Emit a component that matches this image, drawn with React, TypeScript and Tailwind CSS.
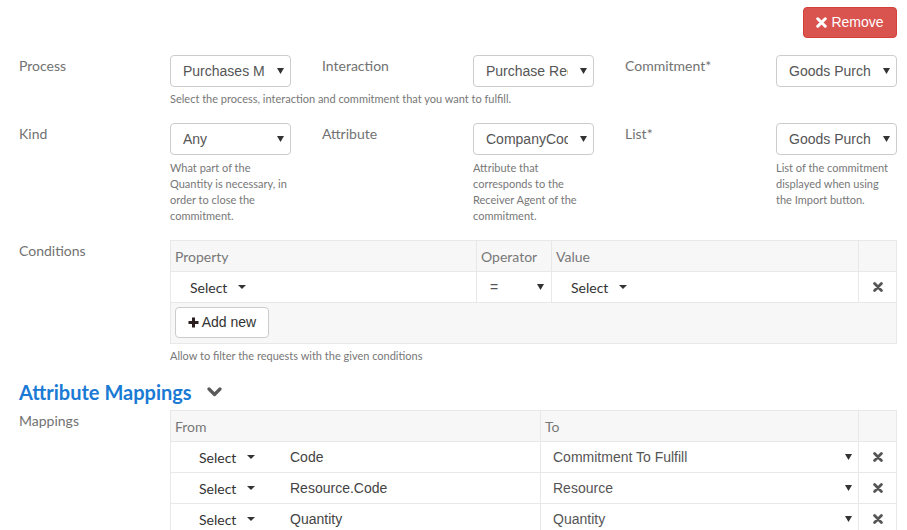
import type { ReactNode } from "react";

const SANS = "font-['Lato',Arial,sans-serif]";
const ARIAL = "font-['Liberation_Sans',Arial,sans-serif]";

function TimesIcon({ size = 10, color = "#555" }: { size?: number; color?: string }) {
  return (
    <svg width={size} height={size} viewBox="0 0 10 10">
      <path d="M1.6 1.6 L8.4 8.4 M8.4 1.6 L1.6 8.4" stroke={color} strokeWidth="2.8" strokeLinecap="round" />
    </svg>
  );
}

function PlusIcon() {
  return (
    <svg width="11" height="11" viewBox="0 0 11 11">
      <path d="M5.5 0.5 V10.5 M0.5 5.5 H10.5" stroke="#2b1f1f" strokeWidth="3" />
    </svg>
  );
}

function ChevronDown() {
  return (
    <svg width="15" height="10" viewBox="0 0 15 10">
      <path d="M2 2 L7.5 7.5 L13 2" fill="none" stroke="#5a5a5a" strokeWidth="3.2" strokeLinecap="round" strokeLinejoin="round" />
    </svg>
  );
}

function Arrow() {
  return (
    <svg width="7" height="6" viewBox="0 0 7 6" className="shrink-0">
      <polygon points="0,0 7,0 3.5,6" fill="#333" />
    </svg>
  );
}

function Caret() {
  return (
    <svg width="8" height="4" viewBox="0 0 8 4" className="shrink-0">
      <polygon points="0,0 8,0 4,4" fill="#333" />
    </svg>
  );
}

function Label({ children, className = "" }: { children: ReactNode; className?: string }) {
  return (
    <div className={`w-[151px] shrink-0 pt-[1px] leading-[20px] text-[14px] text-[#727272] ${SANS} ${className}`}>
      {children}
    </div>
  );
}

function Select({ value }: { value: string }) {
  return (
    <div className={`flex items-center w-[121px] h-[32px] border border-[#ccc] rounded-[4px] bg-white pl-[12px] pr-[6px] ${ARIAL} text-[14px] text-[#555]`}>
      <span className="w-[82px] overflow-hidden whitespace-nowrap">{value}</span>
      <span className="flex-1" />
      <Arrow />
    </div>
  );
}

function Help({ lines }: { lines: string[] }) {
  return (
    <div className={`text-[11px] leading-[16px] text-[#777] ${SANS}`}>
      {lines.map((l) => (
        <div key={l} className="whitespace-nowrap">
          {l}
        </div>
      ))}
    </div>
  );
}

function DropSelect() {
  return (
    <span className={`flex items-center gap-[11px] text-[14px] text-[#333] ${SANS}`}>
      Select
      <Caret />
    </span>
  );
}

const headCell = `bg-[#f7f7f7] h-[30px] flex items-center pl-[4px] text-[14px] text-[#777] ${SANS}`;
const bodyCell = "bg-white h-[30px] flex items-center";

const mappings = [
  { from: "Code", to: "Commitment To Fulfill" },
  { from: "Resource.Code", to: "Resource" },
  { from: "Quantity", to: "Quantity" },
];

export default function App() {
  return (
    <div className="w-[907px] h-[530px] overflow-hidden bg-white">
      <div className="flex justify-end pt-[7px] pr-[10px]">
        <button className={`flex items-center justify-center gap-[4px] w-[94px] h-[31px] rounded-[4px] bg-[#d9534f] border border-[#d43f3a] text-white text-[14px] ${ARIAL}`}>
          <TimesIcon size={11} color="#fff" />
          <span>Remove</span>
        </button>
      </div>

      {/* Process / Interaction / Commitment */}
      <div className="flex items-start pl-[19px] mt-[17px]">
        <Label>Process</Label>
        <Select value="Purchases Management" />
        <Label className="ml-[31px]">Interaction</Label>
        <Select value="Purchase Request" />
        <Label className="ml-[31px]">Commitment*</Label>
        <Select value="Goods Purchase" />
      </div>
      <div className="pl-[170px] mt-[4px]">
        <Help lines={["Select the process, interaction and commitment that you want to fulfill."]} />
      </div>

      {/* Kind / Attribute / List */}
      <div className="flex items-start pl-[19px] mt-[16px]">
        <Label>Kind</Label>
        <div className="w-[121px] shrink-0">
          <Select value="Any" />
          <div className="mt-[5px]">
            <Help lines={["What part of the", "Quantity is necessary, in", "order to close the", "commitment."]} />
          </div>
        </div>
        <Label className="ml-[31px]">Attribute</Label>
        <div className="w-[121px] shrink-0">
          <Select value="CompanyCode" />
          <div className="mt-[5px]">
            <Help lines={["Attribute that", "corresponds to the", "Receiver Agent of the", "commitment."]} />
          </div>
        </div>
        <Label className="ml-[31px]">List*</Label>
        <div className="w-[121px] shrink-0">
          <Select value="Goods Purchase" />
          <div className="mt-[5px]">
            <Help lines={["List of the commitment", "displayed when using", "the Import button."]} />
          </div>
        </div>
      </div>

      {/* Conditions */}
      <div className="flex items-start pl-[19px] mt-[16px]">
        <Label>Conditions</Label>
        <div className="w-[727px]">
          <div className="grid grid-cols-[305px_74px_306px_37px] gap-px p-px bg-[#e8e8e8]">
            <div className={headCell}>Property</div>
            <div className={headCell}>Operator</div>
            <div className={headCell}>Value</div>
            <div className={headCell} />
            <div className={`${bodyCell} pl-[19px]`}>
              <DropSelect />
            </div>
            <div className={`${bodyCell} pl-[13px] pr-[7px] text-[14px] text-[#555] ${ARIAL}`}>
              <span className="flex-1">=</span>
              <Arrow />
            </div>
            <div className={`${bodyCell} pl-[19px]`}>
              <DropSelect />
            </div>
            <div className={`${bodyCell} justify-center`}>
              <TimesIcon />
            </div>
            <div className="col-span-4 bg-[#f7f7f7] h-[40px] pl-[4px] pt-[4px]">
              <button className={`flex items-center justify-center gap-[3px] w-[94px] h-[31px] rounded-[4px] border border-[#ccc] bg-white text-[14px] text-[#333] ${ARIAL}`}>
                <PlusIcon />
                <span>Add new</span>
              </button>
            </div>
          </div>
          <div className="mt-[4px]">
            <Help lines={["Allow to filter the requests with the given conditions"]} />
          </div>
        </div>
      </div>

      {/* Attribute Mappings */}
      <div className="flex items-center gap-[15px] pl-[19px] mt-[14px] h-[28px]">
        <h2 className={`text-[20px] font-bold leading-[28px] text-[#1a7ad4] ${SANS}`}>Attribute Mappings</h2>
        <ChevronDown />
      </div>
      <div className="flex items-start pl-[19px] mt-[4px]">
        <Label>Mappings</Label>
        <div className="w-[727px] grid grid-cols-[369px_317px_37px] gap-px p-px bg-[#e8e8e8]">
          <div className={headCell}>From</div>
          <div className={headCell}>To</div>
          <div className={headCell} />
          {mappings.map((m) => (
            <div key={m.from} className="contents">
              <div className={bodyCell}>
                <div className="w-[119px] pl-[28px] shrink-0">
                  <DropSelect />
                </div>
                <span className={`text-[14px] text-[#444] ${ARIAL}`}>{m.from}</span>
              </div>
              <div className={`${bodyCell} pl-[12px] pr-[6px] text-[14px] text-[#555] ${ARIAL}`}>
                <span className="flex-1">{m.to}</span>
                <Arrow />
              </div>
              <div className={`${bodyCell} justify-center`}>
                <TimesIcon />
              </div>
            </div>
          ))}
        </div>
      </div>
    </div>
  );
}
